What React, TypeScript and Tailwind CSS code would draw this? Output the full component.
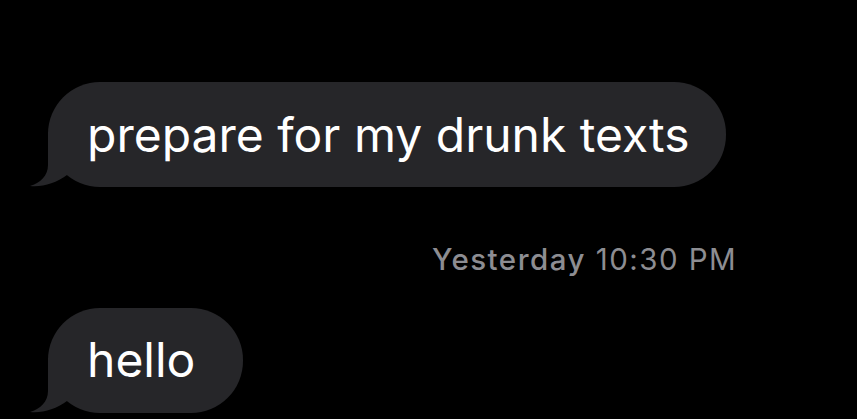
const messages = [
  { id: 1, text: "prepare for my drunk texts", pr: "pr-[36px]" },
  { id: 2, text: "hello", pr: "pr-[48px]" },
];

function Tail() {
  return (
    <svg
      className="absolute bottom-0 left-[-18px] h-[55px] w-[50px]"
      viewBox="0 0 50 55"
      fill="#262629"
    >
      <path d="M18 0 L18 33 C18 44 10 51 0 54 C12 55.5 26 51 37 43 L45 35 L45 0 Z" />
    </svg>
  );
}

function Bubble({ text, pr }: { text: string; pr: string }) {
  return (
    <div className="flex">
      <div
        className={`relative flex h-[105px] items-center rounded-[52px] bg-[#262629] pl-[39px] ${pr}`}
      >
        <Tail />
        <span className="relative text-[48px] leading-none text-white">{text}</span>
      </div>
    </div>
  );
}

export default function App() {
  return (
    <div
      className="h-[419px] w-[857px] overflow-hidden bg-black pl-[48px] pt-[82px]"
      style={{ fontFamily: "Inter, 'Noto Sans', sans-serif" }}
    >
      <Bubble text={messages[0].text} pr={messages[0].pr} />
      <div className="mt-[58px] pl-[384px] text-[29.5px] leading-none tracking-[0.05em] text-[#8d8d92]">
        <span className="font-medium">Yesterday</span> 10:30 PM
      </div>
      <div className="mt-[33px]">
        <Bubble text={messages[1].text} pr={messages[1].pr} />
      </div>
    </div>
  );
}
